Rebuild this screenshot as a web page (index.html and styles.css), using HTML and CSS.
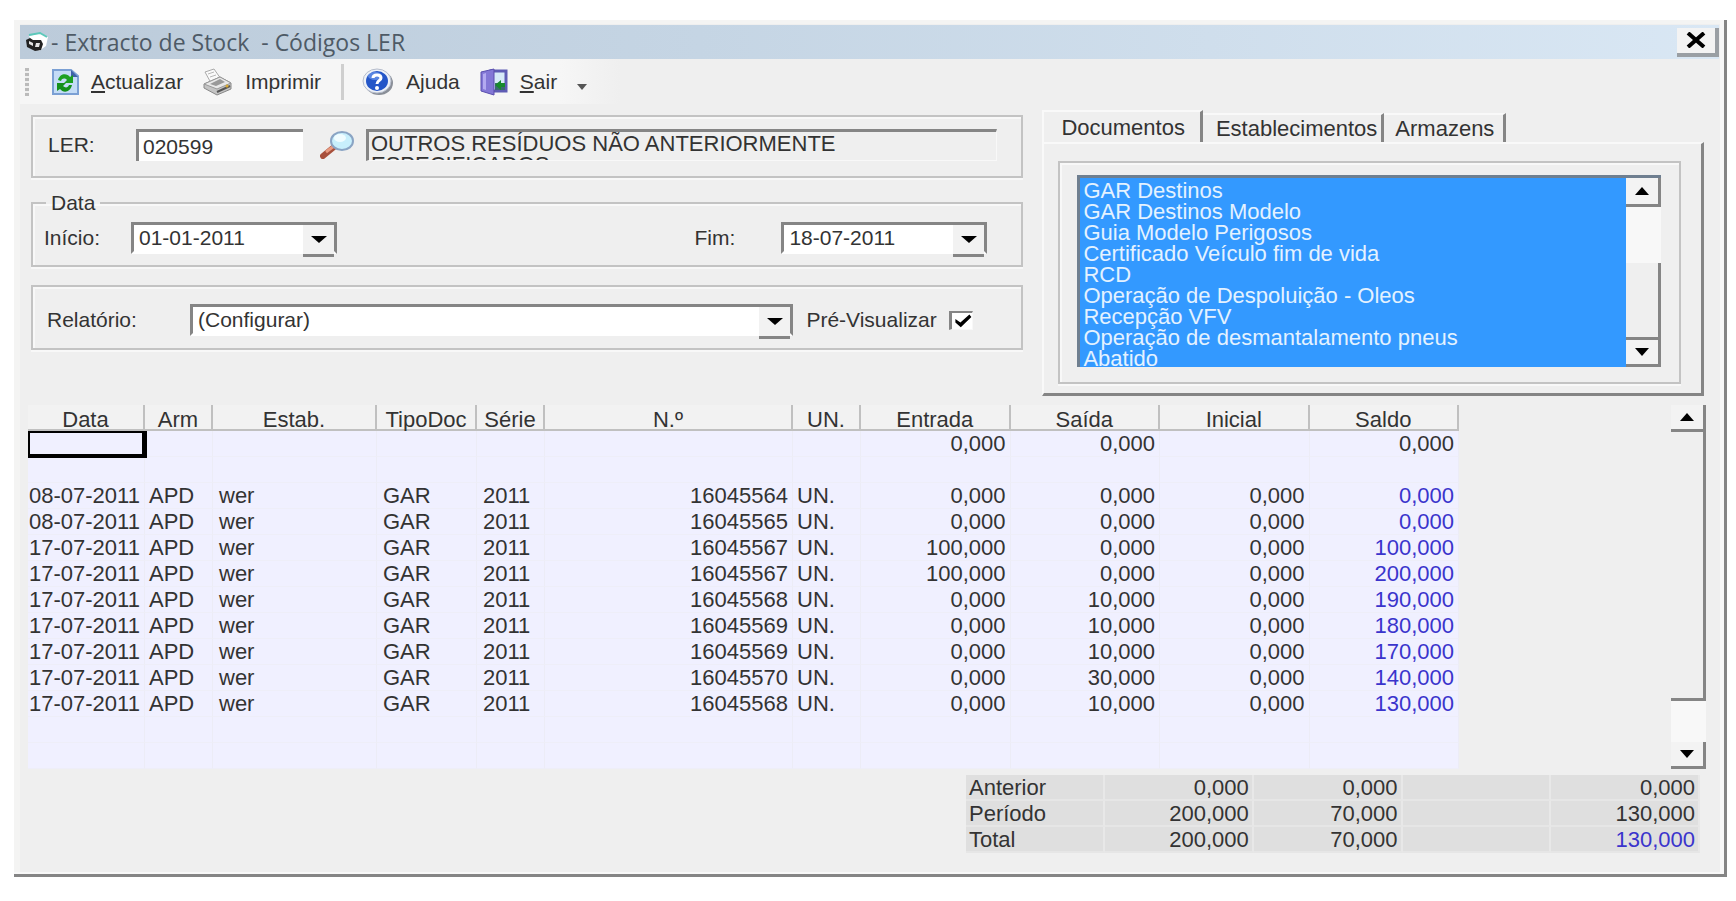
FILE: index.html
```html
<!DOCTYPE html>
<html lang="pt">
    <head>
        <meta charset="UTF-8" />
        <meta name="viewport" content="width=device-width, initial-scale=1.0" />
        <title>Extracto de Stock - Códigos LER</title>
        <link rel="stylesheet" href="styles.css">
    </head>
    <body>
        <div class="window">
            <header class="titlebar">
                <svg class="app-icon" width="24" height="22" viewBox="0 0 24 22">
                    <path d="M4 5 L16 2 L23 6 L21 15 L14 20 L8 12 Z" fill="#fff" />
                    <path d="M4 4 L15 2 L22 6" fill="none" stroke="#5cc8ba" stroke-width="2" />
                    <path d="M1 9 L5 7 L8 9 L16 9 L18 13 L16 19 L10 20 L2 16 Z" fill="#222" />
                    <path d="M4 10 L8 12 L8 15 L4 13 Z M11 12 L15 12 L14 16 L10 16 Z" fill="#e4e4e4" />
                </svg>
                <h1>- Extracto de Stock&nbsp; - Códigos LER</h1>
                <button type="button" class="close" aria-label="Fechar">
                    <svg width="20" height="16" viewBox="0 0 20 16">
                        <path d="M2 1 L18 15 M18 1 L2 15" stroke="#000" stroke-width="4" />
                    </svg>
                </button>
            </header>

            <nav class="toolbar">
                <span class="grip"></span>
                <button type="button" class="tool">
                    <svg width="28" height="28" viewBox="0 0 28 28">
                        <path d="M2 2 H20 L27 8 V26 H2 Z" fill="#c4dcf6" stroke="#7ba0d4" stroke-width="2" />
                        <path d="M20 2 V9 H27 Z" fill="#3f62a8" />
                        <path d="M7 12 C9 5 16 5 19 9 L22 7 V15 H13 L16 12 C14 10 11 10 10 13 Z" fill="#1da022" />
                        <path d="M21 17 C19 25 12 25 9 21 L6 23 V15 H15 L12 18 C14 20 17 20 18 17 Z" fill="#14901a" />
                    </svg>
                    <span><u>A</u>ctualizar</span>
                </button>
                <button type="button" class="tool">
                    <svg width="30" height="28" viewBox="0 0 30 28">
                        <path d="M2 4 L11 1 L18 11 L8 15 Z" fill="#fafafa" stroke="#aaa" />
                        <path d="M5 6 L11 4 M7 9 L13 7" stroke="#b8b8b8" />
                        <path d="M1 16 L17 9 L28 15 L28 21 L14 27 L1 20 Z" fill="#c4c4c4" stroke="#888" />
                        <path d="M1 16 L17 9 L28 15 L14 21 Z" fill="#e8e8e8" stroke="#999" />
                        <path d="M7 16 L17 11 L22 14 L13 18 Z" fill="#999" />
                        <path d="M14 24 L27 18" stroke="#555" stroke-width="2" />
                        <circle cx="24" cy="18" r="1.5" fill="#d8a830" />
                    </svg>
                    <span>Imprimir</span>
                </button>
                <span class="separator"></span>
                <button type="button" class="tool">
                    <svg width="32" height="28" viewBox="0 0 32 28">
                        <ellipse cx="17" cy="15" rx="14" ry="12" fill="#8a8f98" />
                        <ellipse cx="15" cy="13" rx="14" ry="12" fill="#eef2f8" stroke="#b5bccb" />
                        <ellipse cx="15" cy="13" rx="11" ry="10" fill="#2456c8" />
                        <ellipse cx="13" cy="8" rx="7" ry="4" fill="#6f9aec" opacity="0.7" />
                        <path d="M11 10 C11 6 19 6 19 10 C19 13 15 12 15 16" fill="none" stroke="#fff" stroke-width="3" />
                        <circle cx="15" cy="20" r="2" fill="#fff" />
                    </svg>
                    <span>Ajuda</span>
                </button>
                <button type="button" class="tool">
                    <svg width="28" height="28" viewBox="0 0 28 28">
                        <path d="M11 3 H26 V23 H11 Z" fill="#d6eaf8" stroke="#5e5cb4" stroke-width="3" />
                        <path d="M15 15 H25 V22 H15 Z" fill="#3a6a70" />
                        <path d="M1 4 L14 1 V27 L1 23 Z" fill="#8377d6" stroke="#5a4fae" />
                        <path d="M3 6 L6 5 V22 L3 21 Z" fill="#b3aaf0" />
                        <path d="M25 15 H21 V12 L15 17 L21 22 V19 H25 Z" fill="#178a2c" />
                    </svg>
                    <span><u>S</u>air</span>
                </button>
                <svg class="more" width="10" height="6" viewBox="0 0 10 6">
                    <path d="M0 0 H10 L5 6 Z" fill="#555" />
                </svg>
            </nav>

            <main>
                <div class="top">
                    <form class="filters">
                        <fieldset class="group group-ler">
                            <label for="ler">LER:</label>
                            <input type="text" id="ler" class="field" value="020599" />
                            <button type="button" class="search" aria-label="Procurar">
                                <svg width="34" height="28" viewBox="0 0 34 28">
                                    <path d="M14 16 L3 25" stroke="#a8503c" stroke-width="6" stroke-linecap="round" />
                                    <path d="M14 15 L6 21" stroke="#e89a80" stroke-width="3" />
                                    <ellipse cx="22" cy="10" rx="11" ry="9" fill="#c8effc" stroke="#8aa4c4" stroke-width="2" />
                                    <ellipse cx="20" cy="7" rx="6" ry="4" fill="#f0fcff" />
                                </svg>
                            </button>
                            <div class="description">OUTROS RESÍDUOS NÃO ANTERIORMENTE<br>ESPECIFICADOS</div>
                        </fieldset>

                        <fieldset class="group group-date">
                            <legend>Data</legend>
                            <label for="start">Início:</label>
                            <span class="combo">
                                <select id="start"><option>01-01-2011</option></select>
                            </span>
                            <label for="end" class="end-label">Fim:</label>
                            <span class="combo">
                                <select id="end"><option>18-07-2011</option></select>
                            </span>
                        </fieldset>

                        <fieldset class="group group-report">
                            <label for="report">Relatório:</label>
                            <span class="combo">
                                <select id="report"><option>(Configurar)</option></select>
                            </span>
                            <label for="preview" class="preview-label">Pré-Visualizar</label>
                            <input type="checkbox" id="preview" checked />
                        </fieldset>
                    </form>

                    <section class="tabs">
                        <div class="tab-row" role="tablist">
                            <button type="button" role="tab" class="tab active" aria-selected="true">Documentos</button>
                            <button type="button" role="tab" class="tab tab-estab">Establecimentos</button>
                            <button type="button" role="tab" class="tab">Armazens</button>
                        </div>
                        <div class="panel">
                            <fieldset class="group list-group">
                                <div class="list">
                                    <select multiple size="9" aria-label="Documentos">
                                        <option selected>GAR Destinos</option>
                                        <option selected>GAR Destinos Modelo</option>
                                        <option selected>Guia Modelo Perigosos</option>
                                        <option selected>Certificado Veículo fim de vida</option>
                                        <option selected>RCD</option>
                                        <option selected>Operação de Despoluição - Oleos</option>
                                        <option selected>Recepção VFV</option>
                                        <option selected>Operação de desmantalamento pneus</option>
                                        <option selected>Abatido</option>
                                    </select>
                                    <div class="scrollbar">
                                        <button type="button" class="arrow up" aria-label="Subir"></button>
                                        <div class="track"></div>
                                        <div class="thumb"></div>
                                        <button type="button" class="arrow down" aria-label="Descer"></button>
                                    </div>
                                </div>
                            </fieldset>
                        </div>
                    </section>
                </div>

                <div class="grid">
                    <table class="stock">
                        <colgroup>
                            <col class="c-date"><col class="c-small"><col class="c-estab"><col class="c-type"><col class="c-small"><col class="c-num"><col class="c-small"><col class="c-qty"><col class="c-qty"><col class="c-qty"><col class="c-qty">
                        </colgroup>
                        <thead>
                            <tr><th>Data</th><th>Arm</th><th>Estab.</th><th>TipoDoc</th><th>Série</th><th>N.º</th><th>UN.</th><th>Entrada</th><th>Saída</th><th>Inicial</th><th>Saldo</th></tr>
                        </thead>
                        <tbody>
                            <tr><td class="current"></td><td></td><td></td><td></td><td></td><td></td><td></td><td class="num">0,000</td><td class="num">0,000</td><td></td><td class="num">0,000</td></tr>
                            <tr><td></td><td></td><td></td><td></td><td></td><td></td><td></td><td></td><td></td><td></td><td></td></tr>
                            <tr><td>08-07-2011</td><td>APD</td><td>wer</td><td>GAR</td><td>2011</td><td class="num">16045564</td><td>UN.</td><td class="num">0,000</td><td class="num">0,000</td><td class="num">0,000</td><td class="num balance">0,000</td></tr>
                            <tr><td>08-07-2011</td><td>APD</td><td>wer</td><td>GAR</td><td>2011</td><td class="num">16045565</td><td>UN.</td><td class="num">0,000</td><td class="num">0,000</td><td class="num">0,000</td><td class="num balance">0,000</td></tr>
                            <tr><td>17-07-2011</td><td>APD</td><td>wer</td><td>GAR</td><td>2011</td><td class="num">16045567</td><td>UN.</td><td class="num">100,000</td><td class="num">0,000</td><td class="num">0,000</td><td class="num balance">100,000</td></tr>
                            <tr><td>17-07-2011</td><td>APD</td><td>wer</td><td>GAR</td><td>2011</td><td class="num">16045567</td><td>UN.</td><td class="num">100,000</td><td class="num">0,000</td><td class="num">0,000</td><td class="num balance">200,000</td></tr>
                            <tr><td>17-07-2011</td><td>APD</td><td>wer</td><td>GAR</td><td>2011</td><td class="num">16045568</td><td>UN.</td><td class="num">0,000</td><td class="num">10,000</td><td class="num">0,000</td><td class="num balance">190,000</td></tr>
                            <tr><td>17-07-2011</td><td>APD</td><td>wer</td><td>GAR</td><td>2011</td><td class="num">16045569</td><td>UN.</td><td class="num">0,000</td><td class="num">10,000</td><td class="num">0,000</td><td class="num balance">180,000</td></tr>
                            <tr><td>17-07-2011</td><td>APD</td><td>wer</td><td>GAR</td><td>2011</td><td class="num">16045569</td><td>UN.</td><td class="num">0,000</td><td class="num">10,000</td><td class="num">0,000</td><td class="num balance">170,000</td></tr>
                            <tr><td>17-07-2011</td><td>APD</td><td>wer</td><td>GAR</td><td>2011</td><td class="num">16045570</td><td>UN.</td><td class="num">0,000</td><td class="num">30,000</td><td class="num">0,000</td><td class="num balance">140,000</td></tr>
                            <tr><td>17-07-2011</td><td>APD</td><td>wer</td><td>GAR</td><td>2011</td><td class="num">16045568</td><td>UN.</td><td class="num">0,000</td><td class="num">10,000</td><td class="num">0,000</td><td class="num balance">130,000</td></tr>
                            <tr><td></td><td></td><td></td><td></td><td></td><td></td><td></td><td></td><td></td><td></td><td></td></tr>
                            <tr><td></td><td></td><td></td><td></td><td></td><td></td><td></td><td></td><td></td><td></td><td></td></tr>
                        </tbody>
                    </table>
                    <div class="scrollbar">
                        <button type="button" class="arrow up" aria-label="Subir"></button>
                        <div class="thumb"></div>
                        <div class="track"></div>
                        <button type="button" class="arrow down" aria-label="Descer"></button>
                    </div>
                </div>

                <table class="totals">
                    <tr><th scope="row">Anterior</th><td>0,000</td><td>0,000</td><td></td><td>0,000</td></tr>
                    <tr><th scope="row">Período</th><td>200,000</td><td>70,000</td><td></td><td>130,000</td></tr>
                    <tr><th scope="row">Total</th><td>200,000</td><td>70,000</td><td></td><td class="balance">130,000</td></tr>
                </table>
            </main>
        </div>
    </body>
</html>
```
FILE: styles.css
```css
* {
    box-sizing: border-box;
}
body {
    margin: 0;
    padding: 20px 9px 0 14px;
    background-color: white;
    color: #333;
    font-family: "Liberation Sans", Arial, sans-serif;
    font-size: 22px;
    line-height: 26px;
}
button,
input,
select {
    font: inherit;
    color: inherit;
}
button {
    padding: 0;
    border: none;
    background: none;
}
.window {
    padding-top: 5px;
    background-color: #efefef;
    border-right: 3px solid #858585;
    border-bottom: 3px solid #858585;
    box-shadow: inset -4px -2px 0 #f8f8f8, inset 6px 4px 0 #f4f4f3;
}

/* title bar */
.titlebar {
    display: flex;
    align-items: center;
    height: 34px;
    margin: 0 5px 0 6px;
    padding-left: 5px;
    background: linear-gradient(to right, #bccbda, #c5d5e4 40%, #d9e7f4);
}
.titlebar h1 {
    flex: 1;
    margin: 0 0 0 2px;
    font-family: "Open Sans", "Noto Sans", sans-serif;
    font-size: 23px;
    font-weight: normal;
    color: #4e5a66;
}
.close {
    display: flex;
    align-items: center;
    justify-content: center;
    width: 42px;
    height: 29px;
    background-color: #f3f3f3;
    border-right: 4px solid #9a9fa4;
    border-bottom: 4px solid #9a9fa4;
}

/* toolbar */
.toolbar {
    display: flex;
    align-items: center;
    width: 600px;
    height: 45px;
    margin-left: 6px;
    padding-left: 5px;
    background: linear-gradient(to right, #f6f6f6 90%, #efefef);
    font-size: 21px;
}
.grip {
    width: 4px;
    height: 28px;
    margin-right: 22px;
    background: repeating-linear-gradient(#bbb 0 3px, #f0f0f0 3px 5px);
}
.tool {
    display: flex;
    align-items: center;
    gap: 12px;
    margin-right: 20px;
}
.separator {
    width: 3px;
    height: 36px;
    margin-right: 18px;
    background-color: #cfcfcf;
}
.more {
    margin-top: 10px;
}

/* filters */
main {
    padding: 6px 18px 21px 14px;
}
.top {
    display: grid;
    grid-template-columns: 3fr 2fr;
    gap: 19px;
    margin: 0 2px 9px 3px;
}
.filters {
    padding-top: 5px;
    font-size: 21px;
}
.group {
    display: flex;
    align-items: center;
    min-width: 0;
    margin: 0;
    border: 2px solid #c3c3c3;
    box-shadow: inset 2px 2px 0 #f8f8f8, 0 2px 0 #f8f8f8;
}
.group-ler {
    padding: 12px 24px 15px 15px;
}
.group-ler label {
    width: 88px;
}
.group-date {
    margin-top: 13px;
    padding: 7px 34px 11px 11px;
}
.group-date legend {
    margin-left: 2px;
    padding: 0 5px;
    line-height: 24px;
}
.group-date label {
    width: 87px;
}
.group-date .end-label {
    margin-left: auto;
}
.group-date .combo {
    width: 206px;
}
.group-report {
    margin-top: 18px;
    padding: 17px 48px 12px 14px;
}
.group-report label {
    width: 143px;
}
.group-report .combo {
    flex: 1;
}
.group-report .preview-label {
    margin-left: 13px;
}
.field {
    width: 167px;
    height: 32px;
    padding: 0 4px;
    border: solid #858585;
    border-width: 3px 0 0 3px;
    border-radius: 0;
    background-color: white;
}
.search {
    display: flex;
    margin: 0 12px 0 17px;
}
.description {
    flex: 1;
    height: 32px;
    padding: 1px 0 0 2px;
    overflow: hidden;
    border: solid #858585;
    border-width: 3px 1px 1px 3px;
    border-right-color: #f8f8f8;
    border-bottom-color: #f8f8f8;
    font-size: 22px;
    line-height: 21px;
}
.combo {
    position: relative;
    height: 32px;
    border: 3px solid #858585;
    border-bottom-color: white;
    background-color: white;
}
.combo select {
    display: block;
    width: 100%;
    height: 26px;
    padding: 0 34px 0 5px;
    border: none;
    background: none;
    appearance: none;
}
.combo::before {
    content: "";
    position: absolute;
    top: 0;
    right: 0;
    width: 31px;
    height: 29px;
    background-color: #f2f2f2;
    border-bottom: 3px solid #858585;
}
.combo::after {
    content: "";
    position: absolute;
    top: 11px;
    right: 7px;
    border: 8px solid transparent;
    border-top: 7px solid black;
    border-bottom: none;
}
#preview {
    width: 24px;
    height: 19px;
    margin: 0;
    border: solid #858585;
    border-width: 2px 1px 1px 3px;
    border-right-color: #f8f8f8;
    border-bottom-color: #f8f8f8;
    background-color: white;
    appearance: none;
}
#preview:checked::before {
    content: "";
    display: block;
    height: 16px;
    background-color: black;
    clip-path: polygon(15% 40%, 40% 62%, 85% 12%, 95% 28%, 42% 92%, 15% 62%);
}

/* tabs */
.tab-row {
    display: flex;
    align-items: flex-end;
}
.tab {
    height: 29px;
    padding: 0 9px 0 11px;
    border-top: 2px solid #f9f9f9;
    border-right: 3px solid #858585;
    line-height: 27px;
}
.tab.active {
    height: 32px;
    padding: 0 15px 0 17px;
    border-left: 2px solid #f9f9f9;
}
.tab-estab {
    padding-right: 4px;
    padding-left: 13px;
}
.panel {
    padding: 17px 20px 9px 14px;
    border: solid #858585;
    border-width: 2px 3px 3px 2px;
    border-top-color: #f9f9f9;
    border-left-color: #f9f9f9;
}
.list-group {
    padding: 12px 18px 15px 17px;
}
.list {
    display: flex;
    flex: 1;
    height: 192px;
    border-top: 3px solid #6f7f90;
    border-left: 3px solid #6f7f90;
}
.list select {
    flex: 1;
    min-width: 0;
    height: 189px;
    padding: 0;
    border: none;
    border-radius: 0;
    outline: none;
    background-color: #3399ff;
    scrollbar-width: none;
}
.list option {
    min-height: 0;
    height: 21px;
    padding: 0 3px;
    line-height: 21px;
}
.list option:checked {
    background: #3399ff linear-gradient(#3399ff, #3399ff);
    color: #e4f2ff;
}

/* scroll bars */
.scrollbar {
    display: flex;
    flex-direction: column;
    width: 35px;
    background-color: #f8f8f8;
}
.arrow {
    display: flex;
    align-items: center;
    justify-content: center;
    height: 27px;
    background-color: #f3f3f3;
    border-right: 3px solid #858585;
    border-bottom: 3px solid #858585;
}
.arrow::before {
    content: "";
    border: 7px solid transparent;
}
.arrow.up::before {
    border-top: none;
    border-bottom: 8px solid black;
}
.arrow.down::before {
    border-bottom: none;
    border-top: 8px solid black;
}
.thumb {
    background-color: #efefef;
    border-right: 3px solid #858585;
    border-bottom: 3px solid #858585;
}
.list .arrow.up {
    height: 29px;
}
.list .track {
    flex: 3;
}
.list .thumb {
    flex: 4;
}
.grid .thumb {
    flex: 13;
}
.grid .track {
    flex: 2;
}

/* stock table */
.grid {
    display: flex;
    justify-content: space-between;
}
table {
    border-collapse: separate;
    border-spacing: 0;
    table-layout: fixed;
}
th {
    font-weight: normal;
}
.stock {
    width: 1431px;
}
.c-date {
    width: 117px;
}
.c-small {
    width: 68px;
}
.c-estab {
    width: 164px;
}
.c-type {
    width: 100px;
}
.c-num {
    width: 248px;
}
.c-qty {
    width: auto;
}
.stock th {
    height: 26px;
    padding: 6px 0 0;
    border: solid #c0c0c0;
    border-width: 0 2px 2px 0;
    background-color: #f2f2f2;
    line-height: 18px;
}
.stock td {
    position: relative;
    height: 26px;
    padding: 0 4px;
    border-right: 1px solid #ececf6;
    border-bottom: 1px solid #eeeef8;
    background-color: #f0f0ff;
    line-height: 25px;
}
.stock td:first-child {
    padding: 0 0 0 1px;
}
.stock td:nth-child(3),
.stock td:nth-child(4),
.stock td:nth-child(5) {
    padding-left: 6px;
}
.num {
    text-align: right;
}
.stock .current {
    z-index: 1;
}
.stock .current::after {
    content: "";
    position: absolute;
    inset: 0 -3px -2px 0;
    border: solid black;
    border-width: 2px 5px 4px 2px;
}
td.balance {
    color: #3a34cc;
}

/* totals */
.totals {
    width: 734px;
    margin: 6px 6px 0 auto;
}
.totals th,
.totals td {
    height: 26px;
    padding: 2px 3px 0;
    border-right: 2px solid #e8e8e8;
    border-bottom: 2px solid #e6e6e6;
    background-color: #dfdfdf;
    line-height: 22px;
    text-align: right;
}
.totals th {
    width: 139px;
    text-align: left;
}
```
